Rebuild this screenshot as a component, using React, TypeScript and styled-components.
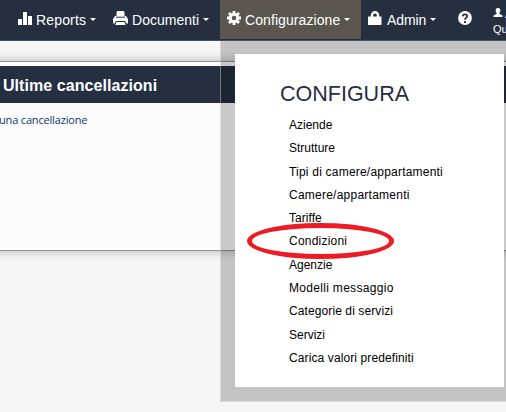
import React from 'react';
import styled, { createGlobalStyle } from 'styled-components';

const GlobalStyle = createGlobalStyle`
  * { box-sizing: border-box; }
  body {
    margin: 0;
    background: #f6f6f6;
    font-family: "Liberation Sans", Arial, sans-serif;
    overflow: hidden;
  }
`;

const Page = styled.div`
  position: relative;
  width: 506px;
  height: 412px;
  overflow: hidden;
`;

const NavBar = styled.nav`
  display: flex;
  height: 41px;
  background: #252f40;
  border-bottom: 1px solid #47525f;
  color: #fff;
`;

const NavItem = styled.div<{ $width: number; $pad: number; $active?: boolean }>`
  display: flex;
  align-items: flex-start;
  flex: 0 0 ${p => p.$width}px;
  height: ${p => (p.$active ? 39 : 40)}px;
  padding-left: ${p => p.$pad}px;
  background: ${p => (p.$active ? '#5a564f' : 'transparent')};
  white-space: nowrap;
  svg { flex: none; margin-top: 11px; }
`;

const NavLabel = styled.span<{ $gap: number; $track?: number }>`
  margin: 12px 0 0 ${p => p.$gap}px;
  font-size: 14px;
  line-height: 16px;
  letter-spacing: ${p => p.$track ?? 0}px;
`;

const Caret = styled.span`
  margin: 18px 0 0 4px;
  border: 3px solid transparent;
  border-top-color: #fff;
  border-bottom: 0;
`;

const UserBlock = styled.div`
  padding: 8px 0 0 7px;
  font-size: 11px;
  line-height: 14px;
  white-space: nowrap;
`;

const UserLine = styled.div`
  display: flex;
  height: 14px;
  gap: 2px;
  line-height: 12px;
`;

const Panel = styled.section`
  height: 190px;
  margin: 20px -10px 0;
  padding: 4px 10px 0;
  border: 1px solid #929292;
  background: #fcfcfc;
  box-shadow: 0 0 10px rgba(0, 0, 0, 0.28);
`;

const PanelTitle = styled.h2`
  height: 37px;
  margin: 0 -10px;
  padding-left: 12px;
  background: #252f40;
  color: #fff;
  font-size: 16px;
  line-height: 39px;
  letter-spacing: 0.06px;
`;

const PanelText = styled.p`
  margin: 9px 0 0 -2px;
  color: #0b3768;
  font: 11px/16px "Open Sans", sans-serif;
  letter-spacing: -0.17px;
`;

const Dropdown = styled.div`
  position: absolute;
  left: 220px;
  top: 41px;
  width: 300px;
  height: 361px;
  padding: 13px 0 0 14px;
  border: 1px solid rgba(190, 190, 190, 0.5);
  border-top: 0;
  background: rgba(0, 0, 0, 0.2);
  background-clip: padding-box;
`;

const MenuCard = styled.div`
  width: 269px;
  height: 333px;
  padding: 27px 0 0 45px;
  background: #fff;
`;

const MenuTitle = styled.h3`
  margin: 0;
  color: #252f40;
  font-size: 21.5px;
  font-weight: 400;
  line-height: 26px;
`;

const MenuList = styled.ul`
  margin: 6px 0 0;
  padding: 0 0 0 9px;
  list-style: none;
`;

const MenuItem = styled.li<{ $track: number }>`
  height: 23.3px;
  color: #000;
  font-size: 12px;
  line-height: 24px;
  letter-spacing: ${p => p.$track}px;
  white-space: nowrap;
`;

const Highlight = styled.div`
  position: absolute;
  left: 247px;
  top: 223px;
  width: 147px;
  height: 36px;
  border: 5px solid #ed1c24;
  border-radius: 50%;
`;

const StatsIcon = () => (
  <svg width="14" height="14" viewBox="0 0 14 14" fill="#fff">
    <path d="M0 8h4v6H0zM5 1h4v13H5zM10 5h4v9h-4z" />
  </svg>
);

const PrintIcon = () => (
  <svg width="15" height="14" viewBox="0 0 15 14" fill="#fff">
    <path d="M4.5 0h6L11.5 1v5h-8V1zM2 5h11l2 3v4.5h-1.5L12 10H3l-1.5 2.5H0V8zM3.5 11h8l1.2 3H2.3z" />
    <path d="M3 6.2h9" stroke="#252f40" />
  </svg>
);

const GearIcon = () => (
  <svg width="14" height="14" viewBox="0 0 14 14">
    <path d="M7 0v14M0 7h14M2 2l10 10M12 2L2 12" stroke="#fff" strokeWidth="2.8" />
    <circle cx="7" cy="7" r="3.8" fill="#5a564f" stroke="#fff" strokeWidth="3" />
  </svg>
);

const LockIcon = () => (
  <svg width="14" height="14" viewBox="0 0 14 14">
    <path d="M4 7V4.2a3 3 0 0 1 6 0V7" fill="none" stroke="#fff" strokeWidth="2.4" />
    <rect y="5.5" width="13.5" height="8.5" rx="0.5" fill="#fff" />
  </svg>
);

const HelpIcon = () => (
  <svg width="14" height="14" viewBox="0 0 14 14">
    <circle cx="7" cy="7" r="6.9" fill="#fff" />
    <path d="M4.7 5.4C4.8 2.7 9.3 2.8 9.2 5.1 9.2 6.7 7 6.7 7 8.8M7 10v2" fill="none" stroke="#252f40" strokeWidth="1.8" />
  </svg>
);

const UserIcon = () => (
  <svg width="10" height="9" viewBox="0 0 9 9" fill="#fff">
    <path d="M4.5 0C6.3 0 7 1 6.8 2.7 6.7 4 6.2 4.5 5.8 5v.8L9 7.4V9H0V7.4l3.2-1.6V5C2.8 4.5 2.3 4 2.2 2.7 2 1 2.7 0 4.5 0z" />
  </svg>
);

const entries: { label: string; track: number }[] = [
  { label: 'Aziende', track: 0 },
  { label: 'Strutture', track: 0 },
  { label: 'Tipi di camere/appartamenti', track: 0.21 },
  { label: 'Camere/appartamenti', track: 0.24 },
  { label: 'Tariffe', track: 0.05 },
  { label: 'Condizioni', track: 0.22 },
  { label: 'Agenzie', track: 0 },
  { label: 'Modelli messaggio', track: 0.31 },
  { label: 'Categorie di servizi', track: 0.1 },
  { label: 'Servizi', track: 0 },
  { label: 'Carica valori predefiniti', track: 0.11 },
];

export default function App() {
  return (
    <>
      <GlobalStyle />
      <Page>
        <NavBar>
          <NavItem $width={105} $pad={18}><StatsIcon /><NavLabel $gap={4} $track={0.15}>Reports</NavLabel><Caret /></NavItem>
          <NavItem $width={115} $pad={8}><PrintIcon /><NavLabel $gap={4} $track={0.02}>Documenti</NavLabel><Caret /></NavItem>
          <NavItem $width={141} $pad={7} $active><GearIcon /><NavLabel $gap={4} $track={0.08}>Configurazione</NavLabel><Caret /></NavItem>
          <NavItem $width={90} $pad={7}><LockIcon /><NavLabel $gap={5} $track={-0.1}>Admin</NavLabel><Caret /></NavItem>
          <NavItem $width={35} $pad={7}><HelpIcon /></NavItem>
          <UserBlock>
            <UserLine><UserIcon />A</UserLine>
            <div>Qu</div>
          </UserBlock>
        </NavBar>
        <Panel>
          <PanelTitle>Ultime cancellazioni</PanelTitle>
          <PanelText>una cancellazione</PanelText>
        </Panel>
        <Dropdown>
          <MenuCard>
            <MenuTitle>CONFIGURA</MenuTitle>
            <MenuList>
              {entries.map(({ label, track }) => <MenuItem key={label} $track={track}>{label}</MenuItem>)}
            </MenuList>
          </MenuCard>
        </Dropdown>
        <Highlight />
      </Page>
    </>
  );
}
